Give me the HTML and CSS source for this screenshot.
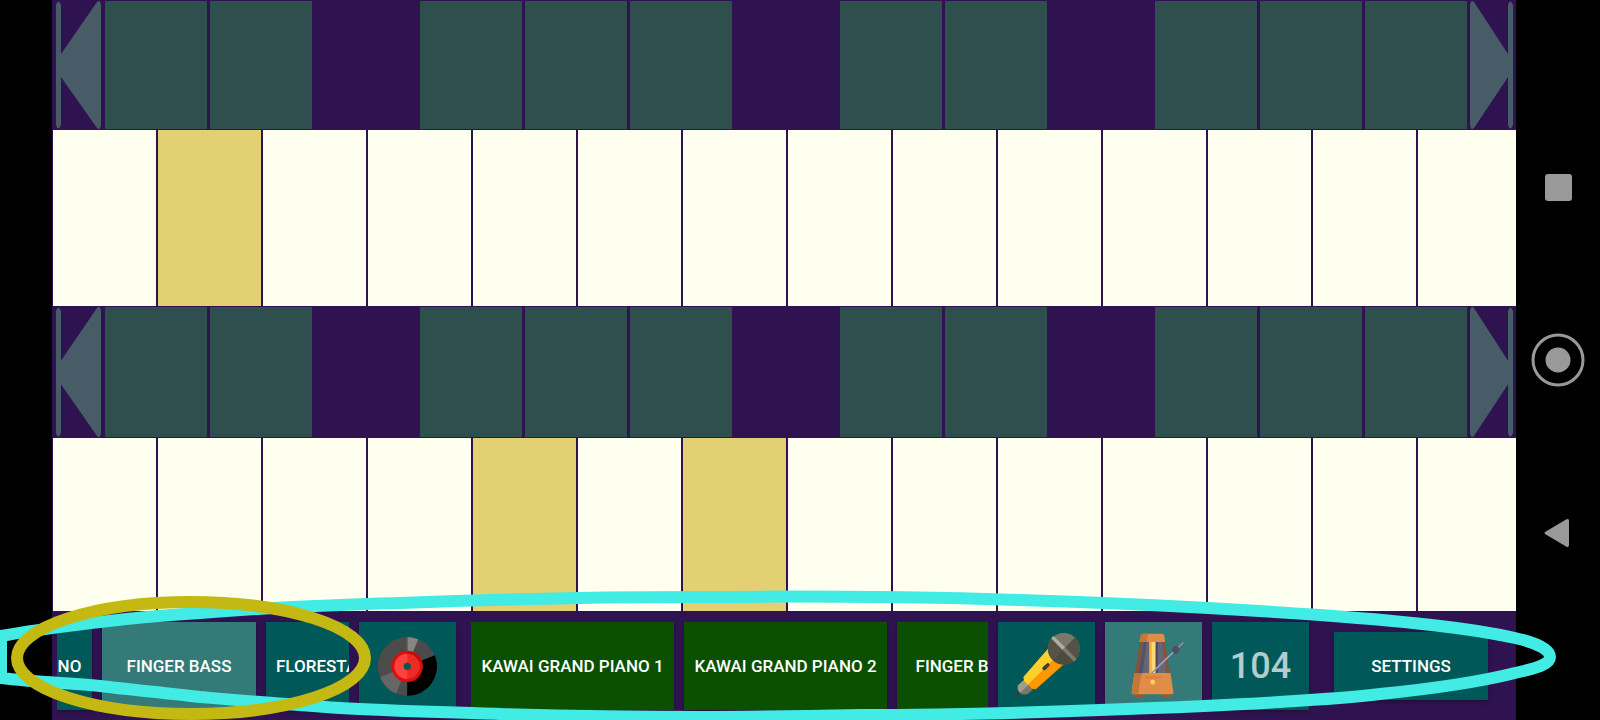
FILE: index.html
```html
<!DOCTYPE html>
<html lang="en">
<head>
<meta charset="utf-8">
<title>Piano</title>
<link rel="stylesheet" href="styles.css">
</head>
<body>
<svg class="defs" aria-hidden="true">
  <symbol id="first" viewBox="0 0 45 128" preserveAspectRatio="none">
    <path d="M0 4Q2 -3 5 4V53L41 1Q44 -2 45 4V124Q44 130 41 127L5 76V124Q2 131 0 124Z"/>
  </symbol>
  <symbol id="last" viewBox="0 0 43 128" preserveAspectRatio="none">
    <path d="M43 4Q40 -3 38 4V53L4 1Q1 -2 0 4V124Q1 130 4 127L38 76V124Q40 131 43 124Z"/>
  </symbol>
</svg>
<div class="screen">
  <main class="app">
    <div class="keyboards">
      <div class="sharps">
        <button class="shift shift-left" aria-label="Lower octave"><svg><use href="#first"/></svg></button>
        <button class="sharp"></button><button class="sharp"></button><span class="rest"></span>
        <button class="sharp"></button><button class="sharp"></button><button class="sharp"></button><span class="rest"></span>
        <button class="sharp"></button><button class="sharp"></button><span class="rest"></span>
        <button class="sharp"></button><button class="sharp"></button><button class="sharp"></button>
        <button class="shift shift-right" aria-label="Higher octave"><svg><use href="#last"/></svg></button>
      </div>
      <div class="naturals">
        <button class="key"></button><button class="key pressed"></button><button class="key"></button><button class="key"></button><button class="key"></button><button class="key"></button><button class="key"></button><button class="key"></button><button class="key"></button><button class="key"></button><button class="key"></button><button class="key"></button><button class="key"></button><button class="key key-end"></button>
      </div>
      <div class="sharps">
        <button class="shift shift-left" aria-label="Lower octave"><svg><use href="#first"/></svg></button>
        <button class="sharp"></button><button class="sharp"></button><span class="rest"></span>
        <button class="sharp"></button><button class="sharp"></button><button class="sharp"></button><span class="rest"></span>
        <button class="sharp"></button><button class="sharp"></button><span class="rest"></span>
        <button class="sharp"></button><button class="sharp"></button><button class="sharp"></button>
        <button class="shift shift-right" aria-label="Higher octave"><svg><use href="#last"/></svg></button>
      </div>
      <div class="naturals">
        <button class="key"></button><button class="key"></button><button class="key"></button><button class="key"></button><button class="key pressed"></button><button class="key"></button><button class="key pressed"></button><button class="key"></button><button class="key"></button><button class="key"></button><button class="key"></button><button class="key"></button><button class="key"></button><button class="key key-end"></button>
      </div>
    </div>
    <div class="toolbar">
      <div class="strip presets">
        <button class="btn partial">NO</button>
        <button class="btn wide selected">FINGER BASS</button>
        <button class="btn">FLORESTA</button>
      </div>
      <button class="btn tile" aria-label="Record">
        <svg class="disc" viewBox="22.5 33 180 180">
          <circle cx="110" cy="124" r="88" fill="#4b4b4b"/>
          <path d="M110 124V36A88 88 0 0 1 143 43Z" fill="#858585"/>
          <path d="M110 124L193 91A88 88 0 0 1 110 212Z" fill="#000"/>
          <path d="M110 124L29 156A88 88 0 0 0 77 206Z" fill="#666"/>
          <path d="M107 36h5v50h-5z" fill="#5d5d5d"/>
          <circle cx="110" cy="124" r="47" fill="#d9100c"/>
          <path d="M110 77A47 47 0 0 1 154 108L110 124Z" fill="#c40d08"/>
          <circle cx="110" cy="124" r="38" fill="#ed2a24"/>
          <path d="M110 86A38 38 0 0 0 110 162Z" fill="#ff423e"/>
          <circle cx="110" cy="124" r="11" fill="#005958"/>
        </svg>
      </button>
      <div class="strip tracks">
        <button class="btn track">KAWAI GRAND PIANO 1</button>
        <button class="btn track">KAWAI GRAND PIANO 2</button>
        <button class="btn track last-track">FINGER BASS</button>
      </div>
      <button class="btn tile" aria-label="Microphone">
        <svg class="icon" viewBox="40.5 39 198 198">
          <path d="M66 207L59 216L49 230Q44 229 45 223L55 209Z" fill="#3e3834"/>
          <path d="M69 181L97 209L82 222Q68 227 58 218Q48 208 53 196Z" fill="#7c7767"/>
          <path d="M69 181L83 195L59 219Q48 208 53 196Z" fill="#a19b8a"/>
          <path d="M143 86L190 133L106 208L94 206L71 183L69 171Z" fill="#ff9700"/>
          <path d="M143 86L167 110L82 194L71 183L69 171Z" fill="#ffcf2e"/>
          <circle cx="190" cy="86" r="47.5" fill="#7b7768"/>
          <path d="M190 86L224 52A47.500 47.500 0 0 1 224 120Z" fill="#55524a"/>
          <path d="M190 86L224 120A47.500 47.500 0 0 1 156 120Z" fill="#4d4a40"/>
          <path d="M190 86L156 52A47.500 47.500 0 0 0 156 120Z" fill="#555247"/>
          <path d="M152 55L159 48L194 82L186 90Z" fill="#b2ad9d"/>
          <path d="M194 82L228 117L221 125L186 90Z" fill="#7e7969"/>
          <path d="M131 145L142 135" stroke="#39352f" stroke-width="11" stroke-linecap="round"/>
          <path d="M132 145L141 137" stroke="#59544a" stroke-width="3"/>
        </svg>
      </button>
      <button class="btn tile selected" aria-label="Metronome">
        <svg class="icon" viewBox="361.5 39 198 198">
          <path d="M405 220h22v10l-4 4h-18zM486 220h22v14h-19l-3-4z" fill="#9d5832"/>
          <path d="M419 64H493L508 162H402Z" fill="#885332"/>
          <path d="M427 66H485L497 160H413Z" fill="#66657a"/>
          <path d="M429 66H438L427 160H413Z" fill="#525365"/>
          <path d="M447 66h-6l-11 94h17zM465 66h7v94h-7z" fill="#484b5e"/>
          <path d="M439 66h8v94h-17z" fill="#66657a"/>
          <path d="M447 66h18v94h-18z" fill="#ffd875"/>
          <path d="M447 66h7v94h-7z" fill="#fbb13c"/>
          <path d="M426 41H487L491 46L494 66H417L421 46Z" fill="#e08d47"/>
          <path d="M426 41H445Q439 52 440 66H417L421 46Z" fill="#c7763b"/>
          <path d="M402 159H510L519 219L515 223H397L393 218Z" fill="#e08d47"/>
          <path d="M402 159H426Q417 178 415 215L411 223H397L393 218Z" fill="#c7763b"/>
          <path d="M435 168h51l-6 8h-46l-6 20z" fill="#d9823f"/>
          <path d="M455 158L547 69" stroke="#9795a5" stroke-width="5" stroke-linecap="round"/>
          <path d="M458 153L520 94" stroke="#b9b7c3" stroke-width="2"/>
          <path d="M518 80L530 77L538 87L533 99L522 102L513 91Z" fill="#524d62"/>
          <circle cx="457" cy="187" r="8" fill="#f2ac45"/>
          <circle cx="456" cy="185" r="6" fill="#ffd477"/>
        </svg>
      </button>
      <button class="btn tile tempo">104</button>
      <button class="btn wide settings">SETTINGS</button>
    </div>
  </main>
  <nav class="system">
    <button class="sys" aria-label="Recent apps"><svg width="27" height="27"><rect width="27" height="27" rx="3"/></svg></button>
    <button class="sys" aria-label="Home"><svg width="54" height="54"><circle cx="27" cy="27" r="25" fill="none" stroke="#999" stroke-width="3"/><circle cx="27" cy="27" r="12.500"/></svg></button>
    <button class="sys" aria-label="Back"><svg width="28" height="30"><path d="M1 14L22 1.500Q25 0 25 3V27Q25 30 22 28.500L1 16Q0 15 1 14Z"/></svg></button>
  </nav>
  <svg class="marks" viewBox="0 0 1600 720" preserveAspectRatio="none" aria-hidden="true">
    <path class="mark-cyan" d="M1 636C33 630 67 626 100 622C133 618 167 615 200 613C260 608 330 605 400 603C500 599 600 597 700 597C810 596 920 597 1020 600C1120 603 1220 608 1320 615C1360 618 1400 621 1440 626C1467 629 1492 633 1515 638C1538 643 1550 650 1550 657C1550 664 1538 668 1515 673C1475 683 1430 689 1380 694C1347 698 1313 700 1280 702C1220 706 1160 708 1100 710C1020 713 940 715 860 715C807 716 750 717 700 717C630 717 570 716 500 714C445 712 390 711 340 708C293 705 247 701 200 697C167 693 133 690 100 686C67 683 33 682 1 678Z"/>
    <ellipse class="mark-gold" cx="191" cy="658" rx="174" ry="56"/>
  </svg>
</div>
</body>
</html>
```

FILE: styles.css
```css
* {
  box-sizing: border-box;
}

body {
  margin: 0;
  background: #000;
  font-family: Roboto, "Noto Sans", sans-serif;
}

button {
  margin: 0;
  padding: 0;
  border: 0;
  border-radius: 0;
  background: none;
  color: inherit;
  font: inherit;
}

.defs {
  display: none;
}

.screen {
  position: relative;
  display: flex;
  height: 100vh;
  padding-left: 52px;
  overflow: hidden;
}

.app {
  display: flex;
  flex: 1;
  flex-direction: column;
  min-width: 0;
  background: #2f1351;
}

.keyboards {
  display: grid;
  flex: 1;
  grid-template-rows: minmax(0, 130fr) minmax(0, 176fr) minmax(0, 132fr) minmax(0, 173fr);
  min-height: 0;
}

.sharps {
  display: flex;
  gap: 3px;
  min-height: 0;
  padding: 1px 3px 1px 4px;
}

.sharp,
.rest {
  flex: 1;
}

.sharp {
  background: #2f4f4f;
}

.shift svg {
  display: block;
  width: 100%;
  height: 100%;
  fill: #475c66;
}

.shift-left {
  width: 45px;
  margin-right: 1px;
}

.shift-right {
  width: 43px;
}

.naturals {
  display: flex;
  gap: 2px;
  padding-left: 1px;
}

.key {
  flex: 103;
  background: #fffff0;
}

.key-end {
  flex: 98;
}

.pressed {
  background: #e3d073;
}

.toolbar {
  display: flex;
  align-items: center;
  gap: 10px;
  padding: 11px 28px 10px 5px;
}

.strip {
  display: flex;
  gap: 10px;
  min-width: 0;
  overflow-x: clip;
}

.presets {
  flex: 0 1 292px;
}

.tracks {
  flex: 1 1 0;
  margin-left: 5px;
}

.btn {
  flex: none;
  height: 88px;
  padding: 0 10px;
  background: #005958;
  box-shadow: 0 2px 4px rgba(0, 0, 0, 0.3);
  color: #fff;
  font-size: 17px;
  font-weight: 500;
  line-height: 24px;
  white-space: nowrap;
}

.partial {
  width: 35px;
  padding: 0 10px 0 0;
}

.wide {
  width: 154px;
}

.track {
  width: 203px;
  padding: 0;
  background: #0a5000;
}

.last-track {
  width: 142px;
}

.tile {
  display: flex;
  align-items: center;
  justify-content: center;
  width: 97px;
  padding: 0;
}

.selected {
  background: #337a79;
}

.tempo {
  color: #b2cdcd;
  font-size: 36px;
}

.settings {
  height: 68px;
  margin-left: 15px;
}

.disc {
  width: 60px;
  height: 60px;
}

.icon {
  width: 66px;
  height: 66px;
}

.system {
  display: flex;
  flex-direction: column;
  justify-content: center;
  width: 84px;
}

.sys {
  display: flex;
  flex: 0 1 173px;
  align-items: center;
  justify-content: center;
}

.sys svg {
  fill: #999;
}

.marks {
  position: absolute;
  inset: 0;
  width: 100%;
  height: 100%;
  fill: none;
  pointer-events: none;
}

.mark-cyan {
  stroke: #42ebe3;
  stroke-width: 12;
}

.mark-gold {
  stroke: #c4b912;
  stroke-width: 12;
}
```
